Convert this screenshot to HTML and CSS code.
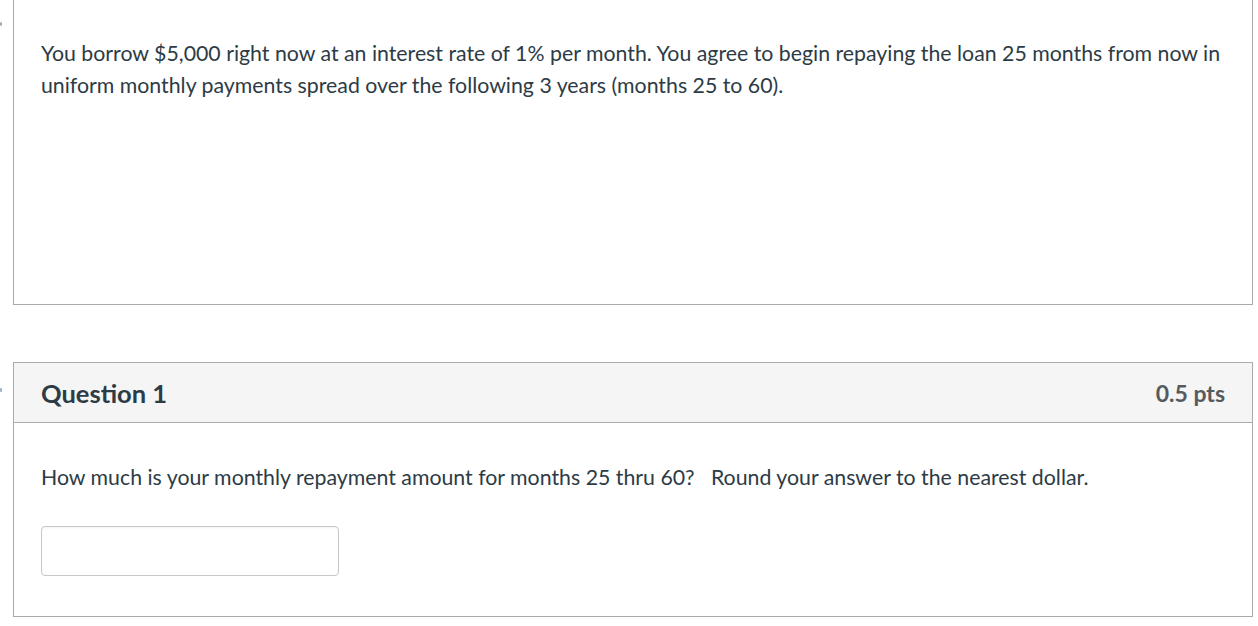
FILE: index.html
```html
<!DOCTYPE html>
<html>
<head>
<meta charset="utf-8">
<link rel="stylesheet" href="styles.css">
</head>
<body>
<div class="page">
  <div class="row">
    <span class="marker marker-top"></span>
    <div class="text-box">
      <p class="lead">You borrow $5,000 right now at an interest rate of 1% per month. You agree to begin repaying the loan 25 months from now in uniform monthly payments spread over the following 3 years (months 25 to 60).</p>
    </div>
  </div>
  <div class="row">
    <span class="marker marker-q"></span>
    <div class="question">
      <div class="q-header">
        <span class="q-title">Question 1</span>
        <span class="q-pts">0.5 pts</span>
      </div>
      <div class="q-body">
        <p class="q-text">How much is your monthly repayment amount for months 25 thru 60?&nbsp;&nbsp; Round your answer to the nearest dollar.</p>
        <input class="answer" type="text">
      </div>
    </div>
  </div>
</div>
</body>
</html>
```
FILE: styles.css
```css
* { box-sizing: border-box; }
html, body { margin: 0; padding: 0; background: #fff; }
body {
  font-family: Lato, "Open Sans", sans-serif;
  color: #2d3b45;
  width: 1258px;
  height: 626px;
  overflow: hidden;
}
.page {
  padding-left: 13px;
  padding-right: 5px;
}
.row { position: relative; }
.marker {
  position: absolute;
  left: -13px;
  width: 2px;
  height: 4px;
  background: #9fb2c4;
  border-radius: 1px;
}
.marker-top { top: 22px; }
.marker-q { top: 26px; }
.text-box {
  border: 1px solid #aaa;
  border-top: none;
  height: 305px;
  padding: 38px 20px 0 27px;
}
.lead {
  margin: 0;
  font-size: 21.3px;
  line-height: 31.5px;
}
.question {
  margin-top: 57px;
  border: 1px solid #aaa;
  height: 255px;
}
.q-header {
  background: #f5f5f5;
  border-bottom: 1px solid #aaa;
  height: 60px;
  display: flex;
  align-items: center;
  justify-content: space-between;
  padding: 0 27px 0 27px;
}
.q-title {
  font-weight: 700;
  font-size: 25.5px;
  color: #2d3b45;
}
.q-pts {
  font-weight: 700;
  font-size: 23px;
  color: #555a5e;
}
.q-body {
  padding: 38px 27px 0 27px;
}
.q-text {
  margin: 0;
  font-size: 21.3px;
  line-height: 32px;
}
.answer {
  display: block;
  margin-top: 33px;
  width: 298px;
  height: 50px;
  border: 1px solid #c8c8c8;
  border-radius: 4px;
  background: #fff;
  box-shadow: inset 0 1px 2px rgba(0,0,0,0.05);
}
```
